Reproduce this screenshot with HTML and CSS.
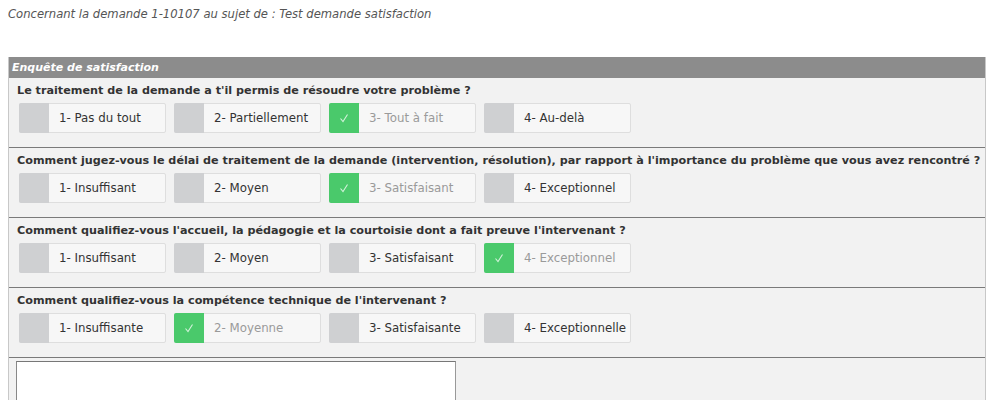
FILE: index.html
```html
<!DOCTYPE html>
<html lang="fr">
<head>
    <meta charset="UTF-8">
    <title>Enquête de satisfaction</title>
    <link rel="stylesheet" href="styles.css">
</head>
<body>
    <p class="intro">Concernant la demande 1-10107 au sujet de : Test demande satisfaction</p>

    <div class="survey">
        <div class="survey-title">Enquête de satisfaction</div>

        <div class="question">
            <div class="question-label">Le traitement de la demande a t'il permis de résoudre votre problème ?</div>
            <div class="choices">
                <label class="choice"><span class="box"></span><span class="text">1- Pas du tout</span></label>
                <label class="choice"><span class="box"></span><span class="text">2- Partiellement</span></label>
                <label class="choice checked"><span class="box"><svg viewBox="0 0 30 30"><polyline points="11.5,15.5 14,18.5 18.5,11.5"/></svg></span><span class="text">3- Tout à fait</span></label>
                <label class="choice"><span class="box"></span><span class="text">4- Au-delà</span></label>
            </div>
        </div>

        <div class="question">
            <div class="question-label">Comment jugez-vous le délai de traitement de la demande (intervention, résolution), par rapport à l'importance du problème que vous avez rencontré ?</div>
            <div class="choices">
                <label class="choice"><span class="box"></span><span class="text">1- Insuffisant</span></label>
                <label class="choice"><span class="box"></span><span class="text">2- Moyen</span></label>
                <label class="choice checked"><span class="box"><svg viewBox="0 0 30 30"><polyline points="11.5,15.5 14,18.5 18.5,11.5"/></svg></span><span class="text">3- Satisfaisant</span></label>
                <label class="choice"><span class="box"></span><span class="text">4- Exceptionnel</span></label>
            </div>
        </div>

        <div class="question">
            <div class="question-label">Comment qualifiez-vous l'accueil, la pédagogie et la courtoisie dont a fait preuve l'intervenant ?</div>
            <div class="choices">
                <label class="choice"><span class="box"></span><span class="text">1- Insuffisant</span></label>
                <label class="choice"><span class="box"></span><span class="text">2- Moyen</span></label>
                <label class="choice"><span class="box"></span><span class="text">3- Satisfaisant</span></label>
                <label class="choice checked"><span class="box"><svg viewBox="0 0 30 30"><polyline points="11.5,15.5 14,18.5 18.5,11.5"/></svg></span><span class="text">4- Exceptionnel</span></label>
            </div>
        </div>

        <div class="question">
            <div class="question-label">Comment qualifiez-vous la compétence technique de l'intervenant ?</div>
            <div class="choices">
                <label class="choice"><span class="box"></span><span class="text">1- Insuffisante</span></label>
                <label class="choice checked"><span class="box"><svg viewBox="0 0 30 30"><polyline points="11.5,15.5 14,18.5 18.5,11.5"/></svg></span><span class="text">2- Moyenne</span></label>
                <label class="choice"><span class="box"></span><span class="text">3- Satisfaisante</span></label>
                <label class="choice"><span class="box"></span><span class="text">4- Exceptionnelle</span></label>
            </div>
        </div>

        <div class="comment">
            <textarea class="comment-input"></textarea>
        </div>
    </div>
</body>
</html>
```

FILE: styles.css
```css
body {
    font-family: 'DejaVu Sans', Verdana, sans-serif;
    font-size: 11px;
    color: #333;
    background: #fff;
    margin: 8px;
}

.intro {
    margin: -2px 0 0;
    line-height: 16px;
    font-size: 11.6px;
    font-style: italic;
    color: #555;
}

.survey {
    width: 976px;
    margin-top: 35px;
    background: #f2f2f2;
    border-left: 1px solid #c8c8c8;
    border-right: 1px solid #c8c8c8;
}

.survey-title {
    height: 21px;
    line-height: 21px;
    padding-left: 3px;
    background: #8c8c8c;
    color: #fff;
    font-weight: bold;
    font-style: italic;
    font-size: 11px;
}

.question {
    padding: 5px 8px 14px;
    border-bottom: 1px solid #7a7a7a;
}

.question-label {
    line-height: 16px;
    font-size: 11.2px;
    font-weight: bold;
    color: #333;
    white-space: nowrap;
}

.choices {
    display: flex;
    gap: 8px;
    margin-top: 4px;
    padding-left: 2px;
}

.choice {
    display: flex;
    box-sizing: border-box;
    width: 147px;
    height: 30px;
    background: #f7f7f7;
    border: 1px solid #dedede;
    border-radius: 2px;
    cursor: pointer;
}

.box {
    width: 30px;
    margin: -1px 0 -1px -1px;
    background: #cfd0d2;
    border-radius: 2px 0 0 2px;
}

.box svg {
    display: block;
    width: 30px;
    height: 30px;
}

.box polyline {
    fill: none;
    stroke: rgba(255, 255, 255, 0.75);
    stroke-width: 1.1;
}

.text {
    padding-left: 10px;
    line-height: 28px;
    font-size: 11.8px;
    color: #333;
}

.checked .box {
    background: #4ac96b;
}

.checked .text {
    color: #9a9a9a;
}

.comment {
    padding: 3px 7px 0;
}

.comment-input {
    display: block;
    width: 434px;
    height: 60px;
    margin: 0;
    border: 1px solid #999;
    border-top-color: #777;
    border-left-color: #888;
    background: #fff;
    resize: none;
}
```
